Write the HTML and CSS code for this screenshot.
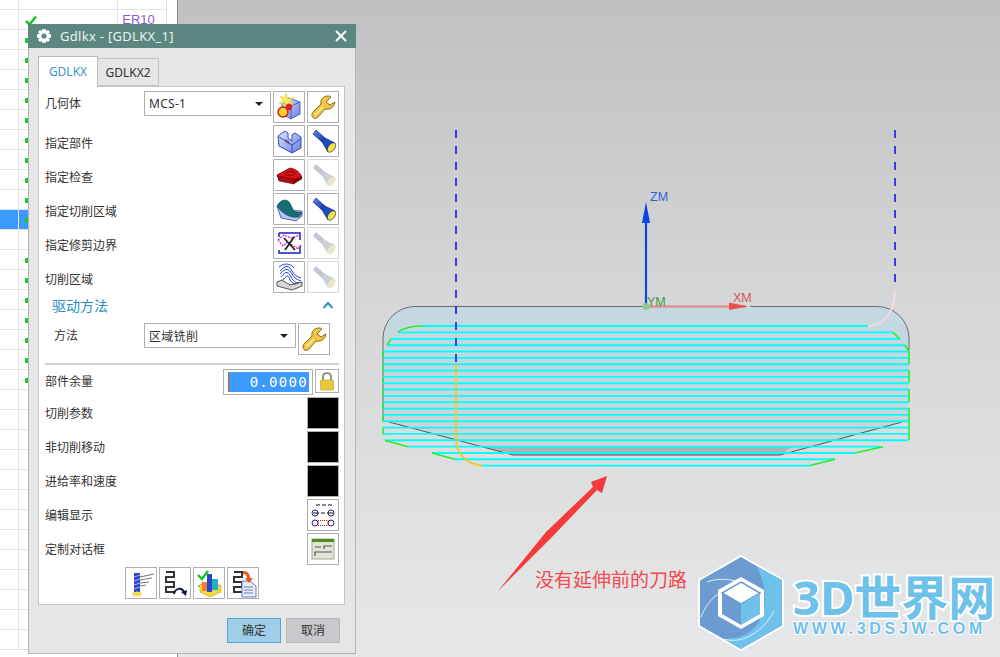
FILE: index.html
```html
<!DOCTYPE html>
<html lang="zh">
<head>
<meta charset="utf-8">
<title>Gdlkx</title>
<link rel="stylesheet" href="styles.css">
</head>
<body>
<svg class="defs" width="0" height="0" aria-hidden="true">
  <defs>
    <linearGradient id="gBlue" x1="0" y1="0" x2="1" y2="1"><stop offset="0" stop-color="#5a8cf5"/><stop offset="1" stop-color="#0c2f9c"/></linearGradient>
    <linearGradient id="gCube" x1="0" y1="0" x2="1" y2="1"><stop offset="0" stop-color="#dfe4ff"/><stop offset="1" stop-color="#6a7fe0"/></linearGradient>
    <linearGradient id="gPart" x1="0" y1="0" x2="0" y2="1"><stop offset="0" stop-color="#c3d9e1"/><stop offset="1" stop-color="#ced2d5"/></linearGradient>
    <symbol id="wrench" viewBox="0 0 30 30"><path d="M20 4C15 4 12 8 13 12L5 20C3 22 4 25 5.500 26C8 27 9 26 10 25L17 17C21 18 26 16 27 10L22 13L18 10L23 5C22 4 21 4 20 4Z" fill="#f2c544" stroke="#8a6a14" stroke-width="1"/><path d="M7 23L15 15" stroke="#fdeeb0" stroke-width="1.500"/></symbol>
    <symbol id="torch" viewBox="0 0 30 30"><path d="M5 8L8 4L17 12L14 16Z" fill="url(#gBlue)" stroke="#0a1f70" stroke-width=".6"/><path d="M14 16L17 12L27 17L20 26Z" fill="#1d49c8" stroke="#0a1f70" stroke-width=".6"/><ellipse cx="23.500" cy="21.500" rx="5.500" ry="3.200" transform="rotate(-52 23.500 21.500)" fill="#f6e23c" stroke="#0a1f70" stroke-width=".6"/></symbol>
    <symbol id="torchOff" viewBox="0 0 30 30"><path d="M5 8L8 4L17 12L14 16Z" fill="#c3c7d2"/><path d="M14 16L17 12L27 17L20 26Z" fill="#cbcfd8"/><ellipse cx="23.500" cy="21.500" rx="5.500" ry="3.200" transform="rotate(-52 23.500 21.500)" fill="#e9e7c8"/></symbol>
    <symbol id="spath" viewBox="0 0 30 30"><path d="M8 3H16V8H8V13H16V18H8V23H16" transform="translate(-2 1)" fill="none" stroke="#333" stroke-width="2"/></symbol>
  </defs>
</svg>
<div class="desktop">
  <aside class="sheet">
    <div class="row row-first"><span class="c1"></span><span class="c2"></span><span class="c3"></span></div>
    <div class="row"><span class="c1"></span><span class="c2"><svg class="check" viewBox="0 0 12 11"><path d="M1 6L4.500 9.500L11 1.500" fill="none" stroke="#17c82a" stroke-width="2.600"/></svg></span><span class="c3 er">ER10</span></div>
    <div class="row"><span class="c1"></span><span class="c2"><i class="tick"></i></span><span class="c3"></span></div>
    <div class="row"><span class="c1"></span><span class="c2"><i class="tick"></i></span><span class="c3"></span></div>
    <div class="row"><span class="c1"></span><span class="c2"><i class="tick"></i></span><span class="c3"></span></div>
    <div class="row"><span class="c1"></span><span class="c2"><i class="tick"></i></span><span class="c3"></span></div>
    <div class="row"><span class="c1"></span><span class="c2"><i class="tick"></i></span><span class="c3"></span></div>
    <div class="row"><span class="c1"></span><span class="c2"><i class="tick"></i></span><span class="c3"></span></div>
    <div class="row"><span class="c1"></span><span class="c2"><i class="tick"></i></span><span class="c3"></span></div>
    <div class="row"><span class="c1"></span><span class="c2"><i class="tick"></i></span><span class="c3"></span></div>
    <div class="row"><span class="c1"></span><span class="c2"><i class="tick"></i></span><span class="c3"></span></div>
    <div class="row row-sel"><span class="c1"></span><span class="c2"><i class="tick"></i></span><span class="c3"></span></div>
    <div class="row"><span class="c1"></span><span class="c2"></span><span class="c3"></span></div>
    <div class="row"><span class="c1"></span><span class="c2"><i class="tick"></i></span><span class="c3"></span></div>
    <div class="row"><span class="c1"></span><span class="c2"><i class="tick"></i></span><span class="c3"></span></div>
    <div class="row"><span class="c1"></span><span class="c2"><i class="tick"></i></span><span class="c3"></span></div>
    <div class="row"><span class="c1"></span><span class="c2"><i class="tick"></i></span><span class="c3"></span></div>
    <div class="row"><span class="c1"></span><span class="c2"><i class="tick"></i></span><span class="c3"></span></div>
    <div class="row"><span class="c1"></span><span class="c2"><i class="tick"></i></span><span class="c3"></span></div>
    <div class="row"><span class="c1"></span><span class="c2"><i class="tick"></i></span><span class="c3"></span></div>
    <div class="row"><span class="c1"></span><span class="c2"></span><span class="c3"></span></div>
    <div class="row"><span class="c1"></span><span class="c2"></span><span class="c3"></span></div>
    <div class="row"><span class="c1"></span><span class="c2"></span><span class="c3"></span></div>
    <div class="row"><span class="c1"></span><span class="c2"></span><span class="c3"></span></div>
    <div class="row"><span class="c1"></span><span class="c2"></span><span class="c3"></span></div>
    <div class="row"><span class="c1"></span><span class="c2"></span><span class="c3"></span></div>
    <div class="row"><span class="c1"></span><span class="c2"></span><span class="c3"></span></div>
    <div class="row"><span class="c1"></span><span class="c2"></span><span class="c3"></span></div>
    <div class="row"><span class="c1"></span><span class="c2"></span><span class="c3"></span></div>
    <div class="row"><span class="c1"></span><span class="c2"></span><span class="c3"></span></div>
    <div class="row"><span class="c1"></span><span class="c2"></span><span class="c3"></span></div>
    <div class="row"><span class="c1"></span><span class="c2"></span><span class="c3"></span></div>
    <div class="row"><span class="c1"></span><span class="c2"></span><span class="c3"></span></div>
  </aside>

  <main class="viewport">
    <svg class="scene" viewBox="178 0 822 657">
      <path d="M383 338A32 32 0 0 1 415 306.500H877A32 32 0 0 1 909 338V421.500L902 422L780 455H513L389 422L383 421.500Z" fill="url(#gPart)"/>
      <path d="M483 447H792L780 455H513Z" fill="#a9b4b8"/>
      <path d="M383 421.500V338A32 32 0 0 1 415 306.500H646M750 306.500H877A32 32 0 0 1 909 338V350" fill="none" stroke="#6b6e70" stroke-width="1"/>
      <path d="M389 422L513 455H780L902 422" fill="none" stroke="#555" stroke-width="1"/>
      <path d="M422 326H868M398 332.400H893M391 338.900H900M387 345.200H905M383 351.500H909M383 357.900H909M383 364.200H909M383 370.500H909M383 376.900H909M383 383.200H909M383 389.500H909M383 395.900H909M383 402.200H909M383 408.600H909M383 414.900H909M383 421.200H909M383 427.600H909M383 433.900H909M385 440.300H908M408 446.600H880M432 453H855M455 459.300H835M482 465.600H810" fill="none" stroke="#00ffff" stroke-width="1.900"/>
      <path d="M398 332C404 328 412 326 422 326M387 345L391 339M383 351.500V358M383 364V371M383 377V383M383 389.500V396M383 402V408.500M383 415V421M383 427.500V434M385 440.500L408 446.700M432 453L455 459.300M893 332.400L900 339M905 345L909 351.500V364M909 370V383M909 389V402M909 408V434M909 427V440M855 453L883 446.700M810 465.600L835 459.300" fill="none" stroke="#22ee22" stroke-width="1.500"/>
      <path d="M456 364V440C456 452 466 465 482 465.600" fill="none" stroke="#ffc20e" stroke-width="1.600"/>
      <path d="M895 290C895 312 884 326 868 326" fill="none" stroke="#f6d9e8" stroke-width="1.800"/>
      <path d="M456 130V364M895 130V282" fill="none" stroke="#0a0aee" stroke-width="1.500" stroke-dasharray="8 8"/>
      <path d="M646 306V222" stroke="#0a46e0" stroke-width="2.200"/>
      <path d="M646 202L650 223H642Z" fill="#0a46e0"/>
      <path d="M646 306.500H746" stroke="#e09090" stroke-width="2.400"/>
      <path d="M729 302.500L748 306.500L729 310Z" fill="#e85050"/>
      <circle cx="646" cy="306.500" r="3.500" fill="#8fc98f"/>
      <text class="axis axis-z" x="650" y="201">ZM</text>
      <text class="axis axis-y" x="647" y="306">YM</text>
      <text class="axis axis-x" x="733" y="302">XM</text>
      <path d="M498 591L546 532L593 487L591 482L607 476L602 493L597 490L552 537Z" fill="#f53a3a"/>
    </svg>
    <div class="note">没有延伸前的刀路</div>
    <div class="logo">
      <svg class="hex" viewBox="0 0 86 96">
        <path d="M43 1L85 25V71L43 95L1 71V25Z" fill="#6b9bd1" stroke="#fff" stroke-width="2"/>
        <path d="M58 11L84 25V70L43 94L26 84C44 84 62 76 66 52C68 38 66 24 58 11Z" fill="#6ec1ea"/>
        <path d="M9 27C28 20 52 26 60 48M3 62C10 44 22 36 34 32M26 84C44 90 66 76 76 56" fill="none" stroke="#dff0fa" stroke-width="1"/>
        <path d="M43 22L66 35V61L43 74L20 61V35Z" fill="#fff"/>
        <path d="M43 27L62 38L43 49L24 38Z" fill="#fff" stroke="#6b9bd1" stroke-width="1.500"/>
        <path d="M24 38L43 49V70L24 59Z" fill="#6b9bd1"/>
        <path d="M62 38L43 49V70L62 59Z" fill="#6ec1ea"/>
      </svg>
      <div class="logo-text">
        <div class="logo-name">3D世界网</div>
        <div class="logo-url">WWW.3DSJW.COM</div>
      </div>
    </div>
  </main>

  <section class="dialog">
    <header class="titlebar">
      <svg class="gear" viewBox="0 0 16 16"><path d="M6.500 1H9.500L10 3L12 2L14 4.300L12.800 6L15 6.600V9.400L12.800 10L14 12L12 14L10 13L9.500 15H6.500L6 13L4 14L2 12L3.200 10L1 9.400V6.600L3.200 6L2 4.300L4 2L6 3Z" fill="#fff"/><circle cx="8" cy="8" r="2.600" fill="#5c8780"/></svg>
      <span class="title">Gdlkx - [GDLKX_1]</span>
      <svg class="close" viewBox="0 0 12 12"><path d="M1 1L11 11M11 1L1 11" stroke="#fff" stroke-width="2"/></svg>
    </header>
    <div class="tabs">
      <div class="tab tab-on">GDLKX</div>
      <div class="tab">GDLKX2</div>
    </div>
    <div class="panel">
      <div class="frow frow-top">
        <span class="lab lab-top">几何体</span>
        <div class="select sel-a"><span>MCS-1</span><i class="caret"></i></div>
        <div class="btn"><svg viewBox="0 0 30 30"><path d="M8 10L15 6L26 10V22L17 27L8 22Z" fill="url(#gCube)" stroke="#3148c8" stroke-width=".8"/><path d="M8 10L17 14V27M17 14L26 10" fill="none" stroke="#3148c8" stroke-width=".8"/><path d="M12 1L14 7L20 5L16 9L20 13L14 11L12 17L11 11L5 12L9 8L6 4L11 6Z" fill="#f7ec50" stroke="#d8a800" stroke-width=".4"/><circle cx="9" cy="20" r="5" fill="#f7d028" stroke="#d01818" stroke-width="1.400"/><circle cx="15" cy="15" r="3.200" fill="#e02020"/></svg></div>
        <div class="btn"><svg><use href="#wrench"/></svg></div>
      </div>
      <div class="frow">
        <span class="lab lab-low">指定部件</span>
        <div class="btn"><svg viewBox="0 0 30 30"><path d="M4 10L11 5L14 7V12L18 15V9L21 7L27 11V22L18 27L5 20Z" fill="url(#gCube)" stroke="#3148c8" stroke-width="1"/><path d="M5 11L18 19V27M18 19L27 13" fill="none" stroke="#3148c8" stroke-width="1"/><path d="M11 13L15 15V18L11 16Z" fill="#55607a"/></svg></div>
        <div class="btn"><svg><use href="#torch"/></svg></div>
      </div>
      <div class="frow">
        <span class="lab lab-low">指定检查</span>
        <div class="btn"><svg viewBox="0 0 30 30"><path d="M3 15L16 8C22 9 27 13 28 18L20 23L5 20Z" fill="#dd1216" stroke="#5a0808" stroke-width=".8"/><path d="M4 16L20 19V24L5 21Z" fill="#a80c10" stroke="#5a0808" stroke-width=".6"/><path d="M20 19L28 16V19L20 24Z" fill="#7e0a0c"/><ellipse cx="16" cy="13.500" rx="5" ry="2" fill="none" stroke="#7a0a0a"/></svg></div>
        <div class="btn btn-off"><svg><use href="#torchOff"/></svg></div>
      </div>
      <div class="frow">
        <span class="lab lab-low">指定切削区域</span>
        <div class="btn"><svg viewBox="0 0 30 30"><path d="M3 12L7 24L22 27L28 22V17L10 16Z" fill="#b7c6f2" stroke="#3148c8" stroke-width=".8"/><path d="M3 12C6 6 11 5 14 7C18 10 18 17 22 18C24 18 27 18 28 19L25 23C19 24 14 22 11 20C8 18 5 15 3 12Z" fill="#176f73" stroke="#0d4a4e" stroke-width=".6"/></svg></div>
        <div class="btn"><svg><use href="#torch"/></svg></div>
      </div>
      <div class="frow">
        <span class="lab lab-low">指定修剪边界</span>
        <div class="btn"><svg viewBox="0 0 30 30"><path d="M5 5H26V12M26 18V25H5V22M5 5V9" fill="none" stroke="#1020c8" stroke-width="1.500"/><path d="M4 12L10 7L17 10L26 7M4 12L9 18L14 14L24 21L27 17" fill="none" stroke="#d010d0" stroke-width="1.200" stroke-dasharray="2 1"/><path d="M10 10L21 22M20 9L11 22" stroke="#222" stroke-width="1.800"/></svg></div>
        <div class="btn btn-off"><svg><use href="#torchOff"/></svg></div>
      </div>
      <div class="frow">
        <span class="lab lab-low">切削区域</span>
        <div class="btn"><svg viewBox="0 0 30 30"><path d="M3 20L8 18L16 23L28 20V24L18 28L3 24Z" fill="#d6d6d6" stroke="#555"/><path d="M6 9C12 2 15 4 18 9C20 13 24 15 27 16M6 12C12 5 15 7 18 12C20 16 24 18 27 19M7 15C12 8 15 10 17 15C19 19 22 21 25 21M9 18C13 12 15 14 16 18C18 21 20 22 22 22M5 5C11 0 17 2 20 6" fill="none" stroke="#1f40d0" stroke-width="1"/></svg></div>
        <div class="btn btn-off"><svg><use href="#torchOff"/></svg></div>
      </div>

      <div class="section">
        <span class="section-title">驱动方法</span>
        <svg class="chev" viewBox="0 0 12 8"><path d="M1.500 7L6 2L10.500 7" fill="none" stroke="#2b8fc0" stroke-width="2"/></svg>
      </div>
      <div class="frow frow-method">
        <span class="lab lab-method">方法</span>
        <div class="select sel-b"><span>区域铣削</span><i class="caret"></i></div>
        <div class="btn"><svg><use href="#wrench"/></svg></div>
      </div>
      <div class="sep"></div>
      <div class="frow frow-stock">
        <span class="lab">部件余量</span>
        <div class="num"><div class="num-in">0.0000</div></div>
        <div class="btn btn-lock"><svg viewBox="0 0 20 22"><path d="M6 10V6.500C6 2 14 2 14 6.500V10" fill="none" stroke="#8d8d70" stroke-width="1.800"/><rect x="3.500" y="10" width="13" height="10" rx="1" fill="#eac83c" stroke="#b89a20" stroke-width=".6"/></svg></div>
      </div>
      <div class="frow"><span class="lab">切削参数</span><div class="btn btn-black"></div></div>
      <div class="frow"><span class="lab">非切削移动</span><div class="btn btn-black"></div></div>
      <div class="frow"><span class="lab">进给率和速度</span><div class="btn btn-black"></div></div>
      <div class="frow">
        <span class="lab">编辑显示</span>
        <div class="btn"><svg viewBox="0 0 30 30"><path d="M8 5H12M14 5H18M20 5H24" stroke="#111" stroke-width="1"/><path d="M5 13H11M13 13H17M19 13H25" stroke="#111"/><circle cx="7" cy="13" r="3" fill="none" stroke="#24247a"/><circle cx="23" cy="13" r="3" fill="none" stroke="#24247a"/><circle cx="7" cy="23" r="3" fill="none" stroke="#24247a"/><circle cx="23" cy="23" r="3" fill="none" stroke="#24247a"/><rect x="10" y="20.500" width="10" height="5" fill="none" stroke="#c81818" stroke-dasharray="1 1"/></svg></div>
      </div>
      <div class="frow">
        <span class="lab">定制对话框</span>
        <div class="btn"><svg viewBox="0 0 30 30"><rect x="4" y="5" width="22" height="20" fill="#e2e4dc" stroke="#9cb088"/><rect x="4" y="5" width="22" height="3" fill="#4f8e1c"/><path d="M7 13H13M16 15V12H24M7 22V18H24" fill="none" stroke="#555" stroke-width="1.200"/></svg></div>
      </div>
      <div class="toolrow">
        <div class="btn"><svg viewBox="0 0 30 30"><path d="M8 5H14V24H8Z" fill="#2b46c8"/><path d="M8 9L14 7M8 13L14 11M8 17L14 15M8 21L14 19" stroke="#a0b4f0"/><path d="M14 9L28 6M14 12L26 10M14 15L23 14M14 18L20 17" stroke="#777" stroke-width="1.200"/><path d="M6 26H16M11 23V29M7 28L15 24M7 24L15 28" stroke="#f0d020" stroke-width="1.200"/></svg></div>
        <div class="btn"><svg><use href="#spath"/></svg><svg class="over" viewBox="0 0 30 30"><path d="M14 26C15 20 22 19 24 24" fill="none" stroke="#101848" stroke-width="2"/><path d="M21 24L27 22L26 28Z" fill="#101848"/></svg></div>
        <div class="btn"><svg viewBox="0 0 30 30"><path d="M4 18L16 13L27 18L16 26Z" fill="#f3e14a" stroke="#b8a020"/><path d="M6 19V24L16 29L27 24V18" fill="#f5d840" stroke="#b8a020" stroke-width=".6"/><path d="M8 14H13V23H8Z" fill="#f08030"/><path d="M13 6H18V24H13Z" fill="#2b46c8"/><path d="M18 11H24V22H18Z" fill="#20b0c8"/><path d="M4 7L8 11L14 3" fill="none" stroke="#14c020" stroke-width="2.400"/></svg></div>
        <div class="btn"><svg><use href="#spath"/></svg><svg class="over" viewBox="0 0 30 30"><path d="M14 13H22L28 18V29H14Z" fill="#e8ecf8" stroke="#6a7ac0"/><path d="M16 19H25M16 22H25M16 25H25" stroke="#6a7ac0"/><path d="M15 3C20 3 22 6 22 10H25L21 15L17 10H19C19 8 18 6 15 6Z" fill="#e85a20"/></svg></div>
      </div>
    </div>
    <footer class="actions">
      <div class="action action-ok">确定</div>
      <div class="action">取消</div>
    </footer>
  </section>
</div>
</body>
</html>
```

FILE: styles.css
```css
* { box-sizing: border-box; }
html, body { margin: 0; padding: 0; }
body {
  width: 1000px;
  height: 657px;
  overflow: hidden;
  font-family: "Noto Sans", "Noto Sans CJK SC", sans-serif;
  font-size: 12px;
  color: #333;
}
.defs { position: absolute; }
.desktop { position: relative; display: flex; width: 1000px; height: 657px; overflow: hidden; }

/* spreadsheet behind */
.sheet { width: 178px; flex: none; background: #fff; border-right: 1px solid #8a8a8a; padding-right: 10px; overflow: hidden; }
.row { display: flex; height: 20px; border-bottom: 1px solid #e3e3e3; }
.row-first { height: 10px; }
.c1 { width: 19px; border-right: 1px solid #e3e3e3; }
.c2 { width: 100px; border-right: 1px solid #e3e3e3; position: relative; padding-left: 6px; }
.c3 { width: 49px; border-right: 1px solid #e3e3e3; padding-left: 4px; }
.er { color: #8a55d8; font-size: 13px; line-height: 14px; padding-top: 3px; font-family: "Liberation Sans", sans-serif; white-space: nowrap; }
.check { display: block; width: 12px; height: 11px; margin-top: 5px; }
.tick { display: block; width: 4px; height: 5px; margin-top: 8px; background: #17c82a; border-radius: 1px; }
.row-sel .c1, .row-sel .c2 { background: #3c9aff; }

/* viewport */
.viewport { position: relative; flex: 1; background: linear-gradient(#c0c0c2 0, #d5d6d8 45%, #e6e7e9 100%); }
.scene { display: block; width: 100%; height: 100%; }
.axis { font: 12.500px "Liberation Sans", sans-serif; }
.axis-z { fill: #2f62e0; }
.axis-y { fill: #3e9c46; }
.axis-x { fill: #d8575a; }
.note { position: absolute; left: 357px; top: 566px; font-size: 19px; line-height: 28px; color: #f24a4f; white-space: nowrap; }
.logo { position: absolute; left: 520px; top: 555px; display: flex; }
.hex { width: 86px; height: 96px; flex: none; }
.logo-text { margin-left: 9px; margin-top: 15px; }
.logo-name { font-size: 47px; line-height: 54px; font-weight: 700; color: #6ec1ea; -webkit-text-stroke: 4px #fff; paint-order: stroke fill; white-space: nowrap; }
.logo-url { margin-top: -2px; font: 700 16px/14px "Liberation Sans", sans-serif; letter-spacing: 3.700px; color: #6ec1ea; -webkit-text-stroke: 2px #fff; paint-order: stroke fill; white-space: nowrap; }

/* dialog window */
.dialog { position: absolute; left: 28px; top: 24px; width: 328px; height: 630px; background: #e6e6e6; border: 1px solid #b4b4b4; border-top: 0; display: flex; flex-direction: column; }
.titlebar { height: 24px; margin: 0 -1px; background: #5c8780; display: flex; align-items: center; padding: 0 9px 0 8px; flex: none; }
.gear { width: 16px; height: 16px; flex: none; }
.title { margin-left: 8px; flex: 1; color: #eaf4f2; font-size: 13px; letter-spacing: .3px; white-space: nowrap; }
.close { width: 12px; height: 12px; flex: none; }
.tabs { display: flex; align-items: flex-end; padding-left: 9px; height: 38px; flex: none; position: relative; z-index: 1; }
.tab { width: 61px; height: 28px; border: 1px solid #c4c4c4; border-left: 0; background: #e6e6e6; color: #333; text-align: center; line-height: 27px; }
.tab-on { width: 60px; height: 31px; background: #fff; color: #3a96c8; border: 1px solid #bbb; border-bottom: 0; line-height: 29px; margin-bottom: -1px; }
.panel { margin-left: 9px; width: 307px; background: #fff; border: 1px solid #c4c4c4; padding: 4px 5px 5px 6px; flex: none; }
.frow { display: flex; align-items: center; justify-content: flex-end; gap: 2px; height: 32px; margin-bottom: 2px; }
.frow-top { align-items: flex-start; }
.lab { margin-right: auto; white-space: nowrap; line-height: 16px; padding-top: 2px; }
.lab-top { line-height: 25px; padding-top: 0; }
.lab-low { padding-top: 6px; }
.select { display: flex; align-items: center; justify-content: space-between; height: 25px; border: 1px solid #b0b0b0; background: #fff; padding: 0 5px 0 4px; letter-spacing: .3px; }
.sel-a { width: 127px; }
.sel-b { width: 152px; }
.caret { width: 0; height: 0; border: 4px solid transparent; border-top: 4px solid #222; border-bottom: 0; margin-right: 2px; }
.btn { position: relative; width: 32px; height: 32px; flex: none; border: 1px solid #b0b0b0; background: #fff; }
.btn svg { display: block; width: 30px; height: 30px; }
.btn .over { position: absolute; left: 0; top: 0; }
.btn-off { border-color: #d9d9d9; }
.btn-black { background: #000; }
.section { display: flex; align-items: center; justify-content: space-between; height: 20px; margin-bottom: 8px; padding: 0 5px 0 7px; }
.section-title { font-size: 14px; color: #2b8fc0; }
.chev { width: 12px; height: 8px; }
.frow-method { padding: 0 9px; margin-bottom: 8px; align-items: flex-start; }
.lab-method { line-height: 26px; padding-top: 0; }
.sep { height: 2px; background: #d2d2d2; margin-bottom: 4px; }
.frow-stock { height: 26px; align-items: flex-start; }
.frow-stock .lab { line-height: 26px; padding-top: 0; }
.num { width: 90px; height: 26px; border: 1px solid #b0b0b0; background: #fff; padding: 2px 3px 2px 4px; }
.num-in { height: 20px; background: #3c9aff; border-left: 1px solid #d06010; color: #fff; text-align: right; font-family: "DejaVu Sans Mono", monospace; font-size: 14px; letter-spacing: 1.300px; line-height: 20px; padding-right: 1px; }
.btn-lock { width: 24px; height: 24px; }
.btn-lock svg { width: 22px; height: 22px; }
.toolrow { display: flex; justify-content: center; gap: 2px; }
.actions { display: flex; justify-content: flex-end; gap: 5px; padding: 13px 15px 0 0; }
.action { width: 54px; height: 25px; background: #c8c9cc; border: 1px solid #b8b8b8; text-align: center; line-height: 23px; }
.action-ok { background: #9fcfe8; border-color: #4ea6d8; }
```
